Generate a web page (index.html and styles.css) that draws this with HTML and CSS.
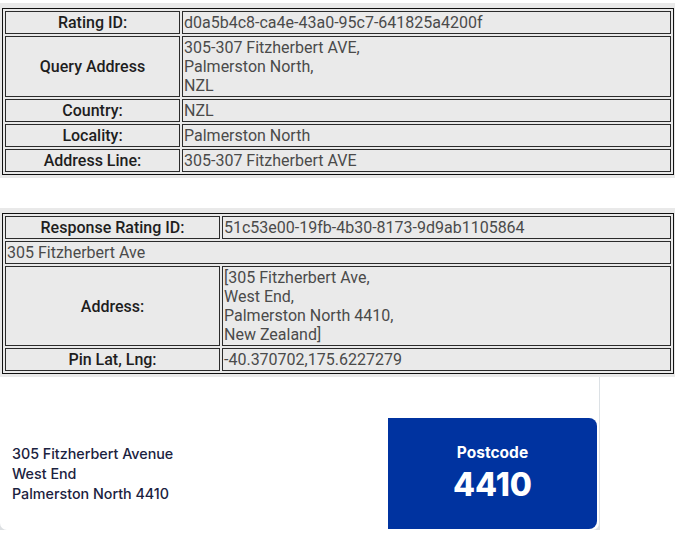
FILE: index.html
```html
<!DOCTYPE html>
<html>
<head>
<meta charset="utf-8">
<link rel="stylesheet" href="styles.css">
</head>
<body>
<div class="panel panel-first">
  <table class="grid grid-query">
    <tr><td class="label">Rating ID:</td><td class="value">d0a5b4c8-ca4e-43a0-95c7-641825a4200f</td></tr>
    <tr><td class="label">Query Address</td><td class="value">305-307 Fitzherbert AVE,<br>Palmerston North,<br>NZL</td></tr>
    <tr><td class="label">Country:</td><td class="value">NZL</td></tr>
    <tr><td class="label">Locality:</td><td class="value">Palmerston North</td></tr>
    <tr><td class="label">Address Line:</td><td class="value">305-307 Fitzherbert AVE</td></tr>
  </table>
</div>
<div class="panel panel-second">
  <table class="grid grid-response">
    <tr><td class="label">Response Rating ID:</td><td class="value">51c53e00-19fb-4b30-8173-9d9ab1105864</td></tr>
    <tr><td class="value" colspan="2">305 Fitzherbert Ave</td></tr>
    <tr><td class="label">Address:</td><td class="value">[305 Fitzherbert Ave,<br>West End,<br>Palmerston North 4410,<br>New Zealand]</td></tr>
    <tr><td class="label">Pin Lat, Lng:</td><td class="value">-40.370702,175.6227279</td></tr>
  </table>
</div>
<div class="card">
  <div class="card-row">
    <div class="addr">
      <div>305 Fitzherbert Avenue</div>
      <div>West End</div>
      <div>Palmerston North 4410</div>
    </div>
    <div class="postcode">
      <div class="pc-label">Postcode</div>
      <div class="pc-value">4410</div>
    </div>
  </div>
</div>
</body>
</html>
```
FILE: styles.css
```css
html, body {
  margin: 0;
  padding: 0;
  background: #ffffff;
  font-family: Roboto, "Liberation Sans", sans-serif;
  font-size: 16px;
}

.panel {
  background: #e9e9e9;
  padding: 5px 1px 3px 2px;
}

.panel-first {
  margin-top: 3px;
}

.panel-second {
  margin-top: 30px;
}

.grid {
  width: 100%;
  border-collapse: separate;
  border-spacing: 2px;
  border: 1px solid #111;
  background: #e9e9e9;
  table-layout: fixed;
}

.grid td {
  box-sizing: border-box;
  border: 1px solid #2b2b2b;
  padding: 1px;
  line-height: 19px;
  vertical-align: middle;
  background: #eaeaea;
}

.grid td.label {
  text-align: center;
  color: #1e1e1e;
  font-weight: 500;
}

.grid td.value {
  text-align: left;
  color: #4a4a4a;
}

.grid-query td.label {
  width: 175px;
}

.grid-response td.label {
  width: 215px;
}

.card {
  width: 600px;
  height: 153px;
  box-sizing: border-box;
  padding-top: 41px;
  background: #fff;
  border-right: 1px solid #dce1e5;
  border-radius: 0 0 7px 7px;
  box-shadow: 0 6px 0 #dcdfe2;
}

.card-row {
  display: flex;
  align-items: center;
  height: 111px;
}

.addr {
  flex: 1;
  padding-left: 12px;
  font-family: Inter, "Noto Sans", sans-serif;
  font-size: 14.3px;
  font-weight: 500;
  line-height: 20px;
  color: #1b2240;
  padding-top: 1px;
}

.postcode {
  width: 209px;
  height: 111px;
  margin-right: 2px;
  background: #0033a0;
  border-radius: 0 8px 8px 0;
  color: #fff;
  font-family: Inter, "Noto Sans", sans-serif;
  font-weight: 700;
  display: flex;
  flex-direction: column;
  align-items: center;
  justify-content: center;
}

.pc-label {
  font-size: 15.5px;
  line-height: 20px;
}

.pc-value {
  font-size: 32px;
  line-height: 38px;
  font-weight: 800;
  margin-top: 3px;
}
```
